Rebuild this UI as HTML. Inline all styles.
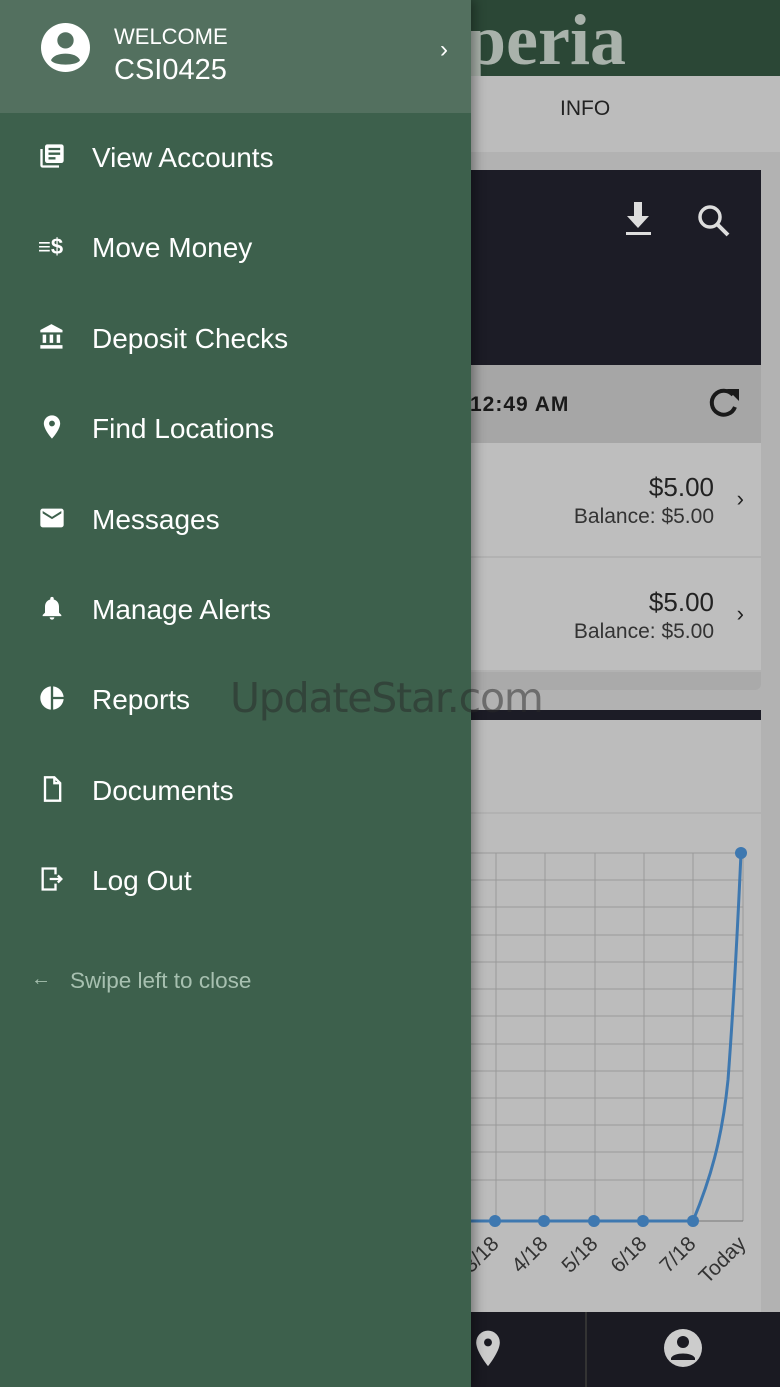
<!DOCTYPE html>
<html><head><meta charset="utf-8"><style>
*{margin:0;padding:0;box-sizing:border-box}
body{width:780px;height:1387px;position:relative;overflow:hidden;background:#b4b4b4;font-family:"Liberation Sans",sans-serif}
.a{position:absolute}
.mi{position:absolute;left:92px;color:#fff;font-size:28px;line-height:30px;transform:translateY(-15px)}
.ic{position:absolute;left:38px;width:28px;height:28px;transform:translateY(-16px)}
.r{position:absolute;color:#222}
</style></head><body>
<div class="a" style="left:0;top:0;width:780px;height:76px;background:#2b4736"></div>
<div class="a" style="left:466px;top:2px;font-family:'Liberation Serif',serif;font-size:72px;font-weight:bold;color:#a9b2ab;line-height:76px">peria</div>
<div class="a" style="left:0;top:76px;width:780px;height:76px;background:#bcbcbc"></div>
<div class="a" style="left:560px;top:97px;font-size:21px;color:#222">INFO</div>
<div class="a" style="left:0;top:152px;width:780px;height:1160px;background:#b2b2b2"></div>
<div class="a" style="left:0;top:170px;width:761px;height:195px;background:#1c1c26"></div>
<svg class="a" style="left:620px;top:200px" width="36" height="38" viewBox="0 0 36 38"><path d="M14 2h8v14h7L18 28 7 16h7z" fill="#ddd"/><rect x="6" y="32" width="25" height="3" fill="#ddd"/></svg>
<svg class="a" style="left:695px;top:202px" width="38" height="38" viewBox="0 0 38 38"><circle cx="15" cy="15" r="10" stroke="#ddd" stroke-width="3.5" fill="none"/><path d="M22 22l11 11" stroke="#ddd" stroke-width="4"/></svg>
<div class="a" style="left:0;top:365px;width:761px;height:78px;background:#a6a6a6"></div>
<div class="a" style="left:470px;top:393px;font-size:21px;font-weight:bold;color:#1a1a1a;letter-spacing:1px">12:49 AM</div>
<svg class="a" style="left:705px;top:385px" width="38" height="36" viewBox="0 0 38 36"><path d="M28 10A12 12 0 1 0 30 22" stroke="#1a1a1a" stroke-width="4" fill="none"/><path d="M22 4h12v12z" fill="#1a1a1a"/></svg>
<div class="a" style="left:0;top:443px;width:761px;height:113px;background:#bebebe"></div>
<div class="a" style="left:0;top:558px;width:761px;height:112px;background:#bebebe"></div>
<div class="a" style="left:0;top:672px;width:761px;height:18px;background:#aaa;border-radius:0 0 6px 6px"></div>
<div class="r" style="right:66px;top:472px;font-size:26px">$5.00</div>
<div class="r" style="right:66px;top:505px;font-size:21px;color:#333">Balance: $5.00</div>
<div class="r" style="right:36px;top:486px;font-size:22px">›</div>
<div class="r" style="right:66px;top:587px;font-size:26px">$5.00</div>
<div class="r" style="right:66px;top:620px;font-size:21px;color:#333">Balance: $5.00</div>
<div class="r" style="right:36px;top:601px;font-size:22px">›</div>
<div class="a" style="left:0;top:710px;width:761px;height:10px;background:#1c1c26"></div>
<div class="a" style="left:0;top:720px;width:761px;height:92px;background:#bcbcbc"></div>
<div class="a" style="left:0;top:814px;width:761px;height:498px;background:#bcbcbc"></div>
<svg class="a" style="left:440px;top:840px" width="340" height="470" viewBox="440 840 340 470">
<g stroke="#9a9a9a" stroke-width="1">
<line x1="496" y1="853" x2="496" y2="1221"/><line x1="545" y1="853" x2="545" y2="1221"/><line x1="595" y1="853" x2="595" y2="1221"/><line x1="644" y1="853" x2="644" y2="1221"/><line x1="693" y1="853" x2="693" y2="1221"/><line x1="743" y1="853" x2="743" y2="1221"/>
<line x1="440" y1="853" x2="743" y2="853"/><line x1="440" y1="880" x2="743" y2="880"/><line x1="440" y1="907" x2="743" y2="907"/><line x1="440" y1="935" x2="743" y2="935"/><line x1="440" y1="962" x2="743" y2="962"/><line x1="440" y1="989" x2="743" y2="989"/><line x1="440" y1="1016" x2="743" y2="1016"/><line x1="440" y1="1044" x2="743" y2="1044"/><line x1="440" y1="1071" x2="743" y2="1071"/><line x1="440" y1="1098" x2="743" y2="1098"/><line x1="440" y1="1125" x2="743" y2="1125"/><line x1="440" y1="1152" x2="743" y2="1152"/><line x1="440" y1="1180" x2="743" y2="1180"/>
</g>
<line x1="440" y1="1221" x2="743" y2="1221" stroke="#777"/>
<path d="M440 1221H693C710 1180 722 1140 728 1080C734 1000 738 920 741 853" stroke="#3e78b0" stroke-width="3" fill="none"/>
<g fill="#3e78b0"><circle cx="495" cy="1221" r="6"/><circle cx="544" cy="1221" r="6"/><circle cx="594" cy="1221" r="6"/><circle cx="643" cy="1221" r="6"/><circle cx="693" cy="1221" r="6"/><circle cx="741" cy="853" r="6"/></g>
<g font-family="Liberation Sans" font-size="21" fill="#333">
<text transform="translate(500 1245) rotate(-45)" text-anchor="end">3/18</text>
<text transform="translate(549 1245) rotate(-45)" text-anchor="end">4/18</text>
<text transform="translate(599 1245) rotate(-45)" text-anchor="end">5/18</text>
<text transform="translate(648 1245) rotate(-45)" text-anchor="end">6/18</text>
<text transform="translate(697 1245) rotate(-45)" text-anchor="end">7/18</text>
<text transform="translate(747 1245) rotate(-45)" text-anchor="end">Today</text>
</g></svg>
<div class="a" style="left:0;top:1312px;width:780px;height:75px;background:#1a1a22"></div>
<div class="a" style="left:585px;top:1312px;width:2px;height:75px;background:#333"></div>
<svg class="a" style="left:472px;top:1328px" width="32" height="42" viewBox="0 0 24 32"><path d="M12 2a9 9 0 0 0-9 9c0 7 9 18 9 18s9-11 9-18a9 9 0 0 0-9-9z" fill="#ccc"/><circle cx="12" cy="11" r="3" fill="#1a1a22"/></svg>
<svg class="a" style="left:663px;top:1328px" width="40" height="40" viewBox="0 0 40 40"><circle cx="20" cy="20" r="19" fill="#ccc"/><circle cx="20" cy="14" r="6" fill="#1a1a22"/><path d="M8 30c3-6 21-6 24 0v2H8z" fill="#1a1a22"/></svg>
<div class="a" style="left:0;top:0;width:471px;height:1387px;background:#3d604c;box-shadow:4px 0 10px rgba(0,0,0,.35)"></div>
<div class="a" style="left:0;top:0;width:471px;height:113px;background:#53705f"></div>
<svg class="a" style="left:41px;top:23px" width="49" height="49" viewBox="0 0 48 48"><circle cx="24" cy="24" r="24" fill="#fff"/><circle cx="24" cy="17" r="8" fill="#53705f"/><path d="M10 36c4-8 24-8 28 0v1c-4 5-24 5-28 0z" fill="#53705f"/></svg>
<div class="a" style="left:114px;top:24px;color:#fff;font-size:22px">WELCOME</div>
<div class="a" style="left:114px;top:54px;color:#fff;font-size:29px">CSI0425</div>
<div class="a" style="left:440px;top:36px;color:#fff;font-size:24px">›</div>
<svg class="ic" style="top:158px" viewBox="0 0 24 24" fill="#fff"><path d="M4 6H2v14a2 2 0 0 0 2 2h14v-2H4zM20 2H8a2 2 0 0 0-2 2v12a2 2 0 0 0 2 2h12a2 2 0 0 0 2-2V4a2 2 0 0 0-2-2zm-1 9H9V9h10zm-4 4H9v-2h6zm4-8H9V5h10z"/></svg>
<div class="mi" style="top:158px">View Accounts</div>
<div class="a" style="left:38px;top:234px;color:#fff;font-size:22px;font-weight:bold">≡$</div>
<div class="mi" style="top:248px">Move Money</div>
<svg class="ic" style="top:339px" viewBox="0 0 24 24" fill="#fff"><path d="M4 10v7h3v-7zm6 0v7h3v-7zM2 22h19v-3H2zm14-12v7h3v-7zM11.5 1 2 6v2h19V6z"/></svg>
<div class="mi" style="top:339px">Deposit Checks</div>
<svg class="ic" style="top:429px" viewBox="0 0 24 24" fill="#fff"><path d="M12 2C8.1 2 5 5.1 5 9c0 5.2 7 13 7 13s7-7.8 7-13c0-3.9-3.1-7-7-7zm0 9.5a2.5 2.5 0 1 1 0-5 2.5 2.5 0 0 1 0 5z"/></svg>
<div class="mi" style="top:429px">Find Locations</div>
<svg class="ic" style="top:520px" viewBox="0 0 24 24" fill="#fff"><path d="M20 4H4a2 2 0 0 0-2 2v12a2 2 0 0 0 2 2h16a2 2 0 0 0 2-2V6a2 2 0 0 0-2-2zm0 4-8 5-8-5V6l8 5 8-5z"/></svg>
<div class="mi" style="top:520px">Messages</div>
<svg class="ic" style="top:610px" viewBox="0 0 24 24" fill="#fff"><path d="M12 22a2 2 0 0 0 2-2h-4a2 2 0 0 0 2 2zm6-6v-5c0-3.1-1.6-5.6-4.5-6.3V4a1.5 1.5 0 0 0-3 0v.7C7.6 5.4 6 7.9 6 11v5l-2 2v1h16v-1z"/></svg>
<div class="mi" style="top:610px">Manage Alerts</div>
<svg class="ic" style="top:700px" viewBox="0 0 24 24" fill="#fff"><path d="M11 2v20c-5-.5-9-4.8-9-10s4-9.5 9-10zm2 0v9h9c-.5-4.7-4.3-8.5-9-9zm0 11v9c4.7-.5 8.5-4.3 9-9z"/></svg>
<div class="mi" style="top:700px">Reports</div>
<svg class="ic" style="top:791px" viewBox="0 0 24 24" fill="none" stroke="#fff" stroke-width="2"><path d="M6 2h8l5 5v15H6zM14 2v5h5"/></svg>
<div class="mi" style="top:791px">Documents</div>
<svg class="ic" style="top:881px" viewBox="0 0 24 24" fill="none" stroke="#fff" stroke-width="2"><path d="M15 8V3H4v18h11v-5"/><path d="M10 12h10M17 9l3 3-3 3" /></svg>
<div class="mi" style="top:881px">Log Out</div>
<div class="a" style="left:31px;top:968px;color:#a7c0b0;font-size:20px">←</div>
<div class="a" style="left:70px;top:968px;color:#a7c0b0;font-size:22.5px">Swipe left to close</div>
<div class="a" style="left:230px;top:674px;color:rgba(40,40,40,.5);font-size:41px;font-family:'DejaVu Sans',sans-serif;letter-spacing:-1.2px">UpdateStar.com</div>
</body></html>
